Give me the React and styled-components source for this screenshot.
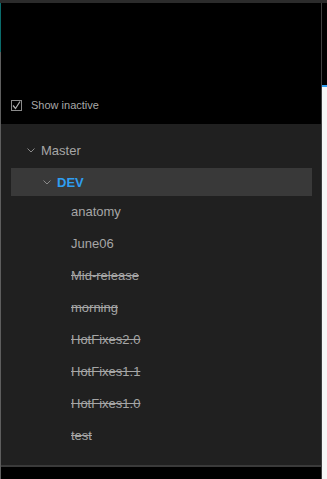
import React from "react";
import styled, { createGlobalStyle } from "styled-components";

const GlobalStyle = createGlobalStyle`
  html, body {
    margin: 0;
    padding: 0;
    background: #000;
  }
  body {
    font-family: "Liberation Sans", Arial, sans-serif;
  }
`;

const branches = [
  { name: "anatomy", inactive: false },
  { name: "June06", inactive: false },
  { name: "Mid-release", inactive: true },
  { name: "morning", inactive: true },
  { name: "HotFixes2.0", inactive: true },
  { name: "HotFixes1.1", inactive: true },
  { name: "HotFixes1.0", inactive: true },
  { name: "test", inactive: true },
];

const Chevron = () => (
  <svg width="8" height="5" viewBox="0 0 8 5">
    <path d="M0.5 0.5 L4 4 L7.5 0.5" fill="none" stroke="#8a8a8a" strokeWidth="1" />
  </svg>
);

const App = () => {
  return (
    <Page>
      <GlobalStyle />
      <TopBar />
      <Body>
        <LeftRail>
          <div className="teal" />
          <div className="gray" />
        </LeftRail>
        <Main>
          <Header>
            <CheckRow>
              <CheckBox>
                <svg width="9" height="9" viewBox="0 0 9 9">
                  <path d="M1 4.5 L3.5 7.5 L8 0.5" fill="none" stroke="#b0b0b0" strokeWidth="1.2" />
                </svg>
              </CheckBox>
              <span>Show inactive</span>
            </CheckRow>
          </Header>
          <Tree>
            <Row $indent={16}>
              <Chevron />
              <Label>Master</Label>
            </Row>
            <Row $indent={32} $selected>
              <Chevron />
              <Label $selected>DEV</Label>
            </Row>
            {branches.map((b) => (
              <Row $indent={60} key={b.name}>
                <Label $inactive={b.inactive}>{b.name}</Label>
              </Row>
            ))}
          </Tree>
          <Footer />
        </Main>
        <Divider />
        <RightStrip>
          <div className="dark" />
          <div className="accent" />
          <div className="light" />
        </RightStrip>
      </Body>
    </Page>
  );
};

const Page = styled.div`
  width: 327px;
  height: 479px;
  display: flex;
  flex-direction: column;
  background: #000;
  overflow: hidden;
`;

const TopBar = styled.div`
  height: 3px;
  background: #2b2b2b;
  flex-shrink: 0;
`;

const Body = styled.div`
  flex: 1;
  display: flex;
`;

const LeftRail = styled.div`
  width: 1px;
  display: flex;
  flex-direction: column;
  .teal {
    height: 49px;
    background: #0b6b6b;
  }
  .gray {
    flex: 1;
    background: #5e5e5e;
  }
`;

const Main = styled.div`
  width: 320px;
  display: flex;
  flex-direction: column;
`;

const Header = styled.div`
  height: 121px;
  background: #000;
  display: flex;
  align-items: flex-end;
  padding: 0 0 13px 10px;
  box-sizing: border-box;
`;

const CheckRow = styled.label`
  display: flex;
  align-items: center;
  gap: 9px;
  font-size: 11px;
  color: #a8a8a8;
  height: 12px;
`;

const CheckBox = styled.span`
  width: 11px;
  height: 11px;
  box-sizing: border-box;
  border: 1px solid #8a8a8a;
  display: flex;
  align-items: center;
  justify-content: center;
`;

const Tree = styled.div`
  height: 341px;
  background: #202020;
  padding-top: 12px;
  box-sizing: border-box;
  display: flex;
  flex-direction: column;
  gap: 4px;
`;

const Row = styled.div`
  height: 28px;
  margin: 0 9px ${(p) => (p.$selected ? "-3px" : "0")} 10px;
  padding-left: ${(p) => p.$indent}px;
  display: flex;
  align-items: center;
  gap: 6px;
  background: ${(p) => (p.$selected ? "#393939" : "transparent")};
  svg {
    margin-top: 1px;
  }
`;

const Label = styled.span`
  font-size: 13px;
  color: ${(p) => (p.$selected ? "#2f9ef0" : "#a6a6a6")};
  font-weight: ${(p) => (p.$selected ? 700 : 400)};
  text-decoration: ${(p) => (p.$inactive ? "line-through" : "none")};
`;

const Footer = styled.div`
  flex: 1;
  border-top: 2px solid #3a3a3a;
  background: #000;
`;

const Divider = styled.div`
  width: 1px;
  background: #3e3e3e;
`;

const RightStrip = styled.div`
  width: 5px;
  display: flex;
  flex-direction: column;
  .dark {
    height: 82px;
    background: #000;
  }
  .accent {
    height: 2px;
    background: #2f9ef0;
  }
  .light {
    flex: 1;
    background: #f6f6f6;
  }
`;

export default App;
